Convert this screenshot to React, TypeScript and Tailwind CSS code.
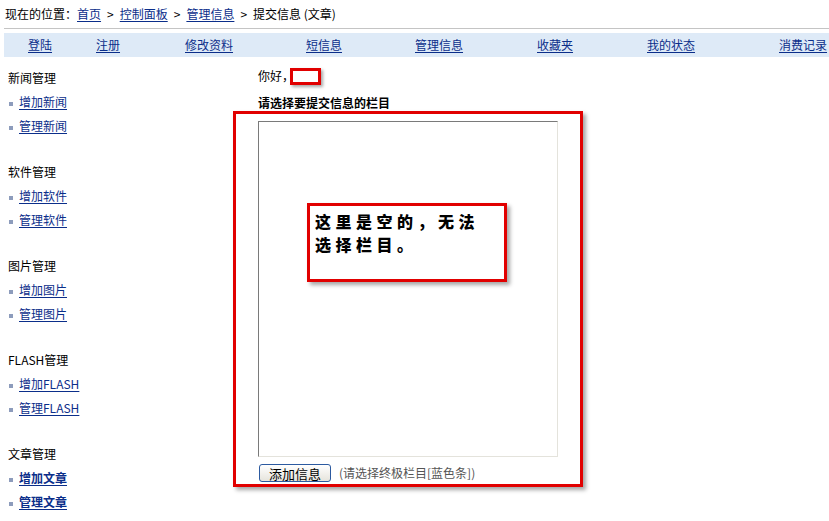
import React from "react";

const font = { fontFamily: '"Noto Sans CJK SC", "Noto Sans", sans-serif' };

const navItems = [
  { label: "登陆", w: "w-[68px]" },
  { label: "注册", w: "w-[89px]" },
  { label: "修改资料", w: "w-[121px]" },
  { label: "短信息", w: "w-[109px]" },
  { label: "管理信息", w: "w-[122px]" },
  { label: "收藏夹", w: "w-[110px]" },
  { label: "我的状态", w: "w-[132px]" },
  { label: "消费记录", w: "w-auto" },
];

const sections = [
  { title: "新闻管理", links: ["增加新闻", "管理新闻"] },
  { title: "软件管理", links: ["增加软件", "管理软件"] },
  { title: "图片管理", links: ["增加图片", "管理图片"] },
  { title: "FLASH管理", links: ["增加FLASH", "管理FLASH"] },
  { title: "文章管理", links: ["增加文章", "管理文章"], bold: true },
];

function Crumb({ children }: { children: React.ReactNode }) {
  return <a className="text-[#0b2e8a] underline underline-offset-2">{children}</a>;
}

export default function App() {
  return (
    <div className="w-[829px] h-[521px] bg-white text-[12px] text-black overflow-hidden" style={font}>
      {/* breadcrumb */}
      <div className="h-[28px] pl-[5px] flex items-center">
        <span>现在的位置：</span>
        <Crumb>首页</Crumb>
        <span className="mx-[6px]">&gt;</span>
        <Crumb>控制面板</Crumb>
        <span className="mx-[6px]">&gt;</span>
        <Crumb>管理信息</Crumb>
        <span className="mx-[6px]">&gt;</span>
        <span>提交信息 (文章)</span>
      </div>
      <div className="ml-[4px] h-px bg-[#c4c4c4]" />

      {/* nav bar */}
      <div className="ml-[4px] mt-[4px] h-[24px] bg-[#deeaf7] flex items-center pl-[24px]">
        {navItems.map((n) => (
          <div key={n.label} className={`${n.w} shrink-0`}>
            <a className="text-[#0b2e8a] underline underline-offset-2">{n.label}</a>
          </div>
        ))}
      </div>

      <div className="flex mt-[9px]">
        {/* sidebar */}
        <div className="w-[233px] shrink-0 pl-[8px]">
          {sections.map((s) => (
            <div key={s.title} className="mb-[22px]">
              <div className="h-[24px] flex items-center">{s.title}</div>
              {s.links.map((l) => (
                <div key={l} className="h-[24px] flex items-center">
                  <span className="w-[4px] h-[4px] bg-[#8d9cbc] ml-[1px] mr-[6px] mt-[3px]" />
                  <a
                    className={`text-[#0b2e8a] underline underline-offset-2 ${s.bold ? "font-bold" : ""}`}
                  >
                    {l}
                  </a>
                </div>
              ))}
            </div>
          ))}
        </div>

        {/* main */}
        <div className="relative flex-1 pl-[25px]">
          <div className="h-[20px] flex items-center">
            <span>你好，</span>
            <span className="inline-block -ml-[4px] w-[31px] h-[17px] border-[3px] border-[#e10000] shadow-[2px_2px_3px_rgba(0,0,0,0.35)]" />
          </div>
          <div className="mt-[7px] h-[20px] flex items-center font-bold">请选择要提交信息的栏目</div>
          <div className="mt-[8px] w-[300px] h-[336px] border border-t-[#7a7a7a] border-l-[#7a7a7a] border-r-[#e4e3dc] border-b-[#e4e3dc] bg-white" />
          <div className="mt-[7px] flex items-center">
            <button className="w-[72px] h-[18px] ml-[1px] rounded-[3px] border border-[#2c5aa0] bg-gradient-to-b from-white to-[#e6e4dc] text-[13px] leading-none text-black">
              添加信息
            </button>
            <span className="ml-[8px] text-[#555]">(请选择终极栏目[蓝色条])</span>
          </div>

          {/* annotations */}
          <div className="absolute left-0 top-[45px] w-[350px] h-[376px] border-[3px] border-[#e10000] shadow-[3px_3px_4px_rgba(0,0,0,0.35)]" />
          <div className="absolute left-[74px] top-[137px] w-[200px] h-[79px] border-[3px] border-[#e10000] bg-white shadow-[3px_3px_4px_rgba(0,0,0,0.35)] pl-[5px] pt-[4px] text-[16px] leading-[23px] font-black tracking-[4.5px]">
            这里是空的，无法
            <br />
            选择栏目。
          </div>
        </div>
      </div>
    </div>
  );
}
